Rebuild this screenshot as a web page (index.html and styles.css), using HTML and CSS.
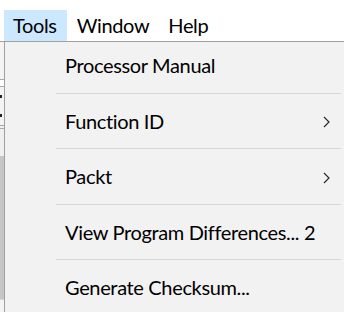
FILE: index.html
```html
<!DOCTYPE html>
<html lang="en">
<head>
<meta charset="utf-8">
<title>Tools menu</title>
<link rel="stylesheet" href="styles.css">
</head>
<body>
<div class="screen">
  <nav class="menubar">
    <div class="menubar-item active">Tools</div>
    <div class="menubar-item">Window</div>
    <div class="menubar-item">Help</div>
  </nav>
  <div class="workspace">
    <div class="backdrop">
      <div class="bd-top"></div>
      <div class="bd-rule"></div>
      <div class="bd-gap"></div>
      <div class="bd-rule"></div>
      <div class="bd-arrows"><span></span><span></span></div>
      <div class="bd-rule2"></div>
      <div class="bd-mark"></div>
      <div class="bd-block"></div>
      <div class="bd-foot"></div>
    </div>
    <div class="dropdown">
      <div class="item first"><span class="label">Processor Manual</span></div>
      <div class="sep"></div>
      <div class="item"><span class="label">Function ID</span>
        <svg class="chev" width="7" height="12" viewBox="0 0 7 12"><polyline points="1,1 6,6 1,11" fill="none" stroke="#2b2b2b" stroke-width="1.2"/></svg>
      </div>
      <div class="sep"></div>
      <div class="item"><span class="label">Packt</span>
        <svg class="chev" width="7" height="12" viewBox="0 0 7 12"><polyline points="1,1 6,6 1,11" fill="none" stroke="#2b2b2b" stroke-width="1.2"/></svg>
      </div>
      <div class="sep"></div>
      <div class="item"><span class="label">View Program Differences... 2</span></div>
      <div class="sep"></div>
      <div class="item"><span class="label">Generate Checksum...</span></div>
    </div>
  </div>
</div>
</body>
</html>
```
FILE: styles.css
```css
html, body {
  margin: 0;
  padding: 0;
}
body {
  width: 344px;
  height: 312px;
  overflow: hidden;
  background: #f2f2f2;
  font-family: Lato, "Noto Sans", "Liberation Sans", sans-serif;
  font-size: 20px;
  letter-spacing: -0.35px;
  color: #000;
}
.screen {
  display: flex;
  flex-direction: column;
  height: 312px;
}
.menubar {
  display: flex;
  align-items: flex-end;
  height: 41px;
  padding-left: 4px;
  background: #fff;
  border-bottom: 1px solid #a0a0a0;
  box-sizing: content-box;
}
.menubar-item {
  height: 31px;
  line-height: 31px;
  padding: 0 9px 0 9px;
  box-sizing: border-box;
}
.menubar-item.active {
  background: #cce8ff;
  padding-right: 10px;
}
.menubar-item + .menubar-item {
  padding-left: 10px;
}
.workspace {
  flex: 1;
  display: flex;
  min-height: 0;
}
.backdrop {
  width: 4px;
  display: flex;
  flex-direction: column;
  background: #f0f0f0;
}
.bd-top { height: 37px; background: #f4f4f4; }
.bd-rule { height: 1px; background: #a8a8a8; }
.bd-gap { height: 6px; background: #fff; }
.bd-arrows {
  height: 38px;
  display: flex;
  flex-direction: column;
  justify-content: space-around;
  background: #f4f4f4;
}
.bd-arrows span {
  display: block;
  width: 2px;
  height: 3px;
  background: #222;
}
.bd-rule2 { height: 4px; border-top: 1px solid #a8a8a8; border-bottom: 1px solid #a8a8a8; box-sizing: border-box; }
.bd-mark { height: 27px; }
.bd-block { height: 143px; background: #c6c6c6; }
.bd-foot { flex: 1; background: #f4f4f4; border-top: 1px solid #d8d8d8; }
.dropdown {
  flex: 1;
  display: flex;
  flex-direction: column;
  border-left: 1px solid #a0a0a0;
  background: #f2f2f2;
}
.item {
  display: flex;
  align-items: center;
  justify-content: space-between;
  height: 54.4px;
  line-height: 54.4px;
  padding: 0 14px 0 60px;
  flex: none;
  white-space: nowrap;
}
.item.first {
  height: 51px;
  line-height: 46px;
  align-items: flex-start;
}
.chev {
  display: block;
  margin-top: 2px;
}
.sep {
  height: 1px;
  flex: none;
  background: #d7d7d7;
  margin: 0 3px 0 51px;
}
```
